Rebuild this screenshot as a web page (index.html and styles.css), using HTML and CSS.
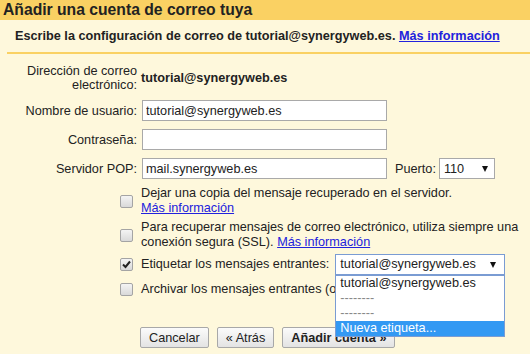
FILE: index.html
```html
<!DOCTYPE html>
<html lang="es">
<head>
    <meta charset="UTF-8">
    <meta name="viewport" content="width=device-width, initial-scale=1.0">
    <title>Añadir una cuenta de correo tuya</title>
    <link rel="stylesheet" href="styles.css">
</head>
<body>
    <div class="title">Añadir una cuenta de correo tuya</div>
    <div class="intro">Escribe la configuración de correo de tutorial@synergyweb.es. <a href="#">Más información</a></div>

    <div class="form">
        <div class="label">Dirección de correo electrónico:</div>
        <div class="strong">tutorial@synergyweb.es</div>

        <label class="label">Nombre de usuario:</label>
        <div><input class="field" type="text" value="tutorial@synergyweb.es"></div>

        <label class="label">Contraseña:</label>
        <div><input class="field" type="password" value=""></div>

        <label class="label">Servidor POP:</label>
        <div class="pop">
            <input class="field" type="text" value="mail.synergyweb.es">
            <span class="pop-label">Puerto:</span>
            <div class="select port"><span>110</span><span class="arrow"></span></div>
        </div>
    </div>

    <div class="checks">
        <div class="check-row">
            <div class="check-slot"><span class="cb"></span></div>
            <div class="check-text">Dejar una copia del mensaje recuperado en el servidor. <a href="#">Más información</a></div>
        </div>
        <div class="check-row">
            <div class="check-slot"><span class="cb"></span></div>
            <div class="check-text">Para recuperar mensajes de correo electrónico, utiliza siempre una conexión segura (SSL). <a href="#">Más información</a></div>
        </div>
        <div class="check-row">
            <div class="check-slot">
                <span class="cb">
                    <svg width="11" height="11" viewBox="0 0 11 11"><path d="M2 5.5 L4.5 8 L9 2.5" fill="none" stroke="#222" stroke-width="2"/></svg>
                </span>
            </div>
            <div class="check-text">Etiquetar los mensajes entrantes:</div>
            <div class="pick-wrap">
                <div class="select pick"><span>tutorial@synergyweb.es</span><span class="arrow"></span></div>
                <ul class="options">
                    <li>tutorial@synergyweb.es</li>
                    <li class="sep">--------</li>
                    <li class="sep">--------</li>
                    <li class="active">Nueva etiqueta...</li>
                </ul>
            </div>
        </div>
        <div class="check-row archive">
            <div class="check-slot"><span class="cb"></span></div>
            <div class="check-text">Archivar los mensajes entrantes (omitir Recibidos)</div>
        </div>
    </div>

    <div class="actions">
        <button>Cancelar</button>
        <button>« Atrás</button>
        <button class="primary">Añadir cuenta »</button>
    </div>
</body>
</html>
```

FILE: styles.css
```css
body {
    margin: 0;
    background: #fef8dc;
    font-family: "Liberation Sans", Arial, sans-serif;
    font-size: 12.7px;
    color: #222;
    overflow: hidden;
}
a {
    color: #2222dd;
}
.title {
    background: #fad163;
    font-size: 15.7px;
    font-weight: bold;
    line-height: 20px;
    padding: 0 3px;
}
.intro {
    margin-left: 7px;
    padding: 9px 0 9px 8px;
    border-bottom: 2px solid #fad163;
    font-weight: bold;
    line-height: 14px;
}
.form {
    display: grid;
    grid-template-columns: 137px 1fr;
    column-gap: 4px;
    row-gap: 8px;
    align-items: center;
    padding: 10px 4px 0 0;
    line-height: 14px;
}
.label {
    text-align: right;
}
.strong {
    font-weight: bold;
}
.field {
    width: 245px;
    height: 21px;
    box-sizing: border-box;
    margin: 0 0 0 1px;
    padding: 0 3px;
    border: 1px solid #a9a9a9;
    background: #fff;
    font: inherit;
    color: #222;
}
.pop {
    display: flex;
    align-items: center;
}
.pop-label {
    margin: 0 3px 0 8px;
}
.select {
    height: 21px;
    box-sizing: border-box;
    border: 1px solid #a9a9a9;
    background: #fff;
    display: flex;
    align-items: center;
    justify-content: space-between;
    padding: 0 6px 0 4px;
}
.arrow {
    width: 0;
    height: 0;
    border-left: 3px solid transparent;
    border-right: 3px solid transparent;
    border-top: 6px solid #111;
}
.port {
    width: 56px;
}
.checks {
    margin-top: 7px;
    line-height: 15px;
}
.check-row {
    display: flex;
    align-items: center;
}
.check-row + .check-row {
    margin-top: 4px;
}
.check-row.archive {
    margin-top: 7px;
}
.check-slot {
    width: 137px;
    flex: none;
    display: flex;
    justify-content: flex-end;
    padding-right: 4px;
    box-sizing: border-box;
}
.cb {
    width: 13px;
    height: 13px;
    box-sizing: border-box;
    border: 1px solid #a4a4a4;
    border-radius: 2px;
    background: linear-gradient(#f4f4f4, #d9d9d9);
    display: flex;
    align-items: center;
    justify-content: center;
}
.check-text {
    margin-left: 4px;
}
.check-text a {
    white-space: nowrap;
}
.pick-wrap {
    position: relative;
    margin-left: 6px;
}
.pick {
    width: 170px;
    border-color: #7a9cd3;
    padding-right: 8px;
}
.options {
    position: absolute;
    top: 100%;
    left: 0;
    width: 170px;
    box-sizing: border-box;
    margin: 0;
    padding: 0;
    list-style: none;
    background: #fff;
    border: 1px solid #7a9cd3;
    z-index: 2;
}
.options li {
    height: 15px;
    line-height: 15px;
    padding: 0 4px;
}
.options .sep {
    color: #888;
}
.options .active {
    background: #3399f3;
    color: #fff;
}
.actions {
    display: flex;
    gap: 8px;
    margin: 30px 0 0 140px;
}
button {
    height: 21px;
    padding: 0 8px;
    border: 1px solid #a8a8a8;
    border-radius: 2px;
    background: linear-gradient(#fbfbfb, #e3e3e3);
    font: inherit;
    color: #222;
}
.primary {
    font-weight: bold;
}
```
